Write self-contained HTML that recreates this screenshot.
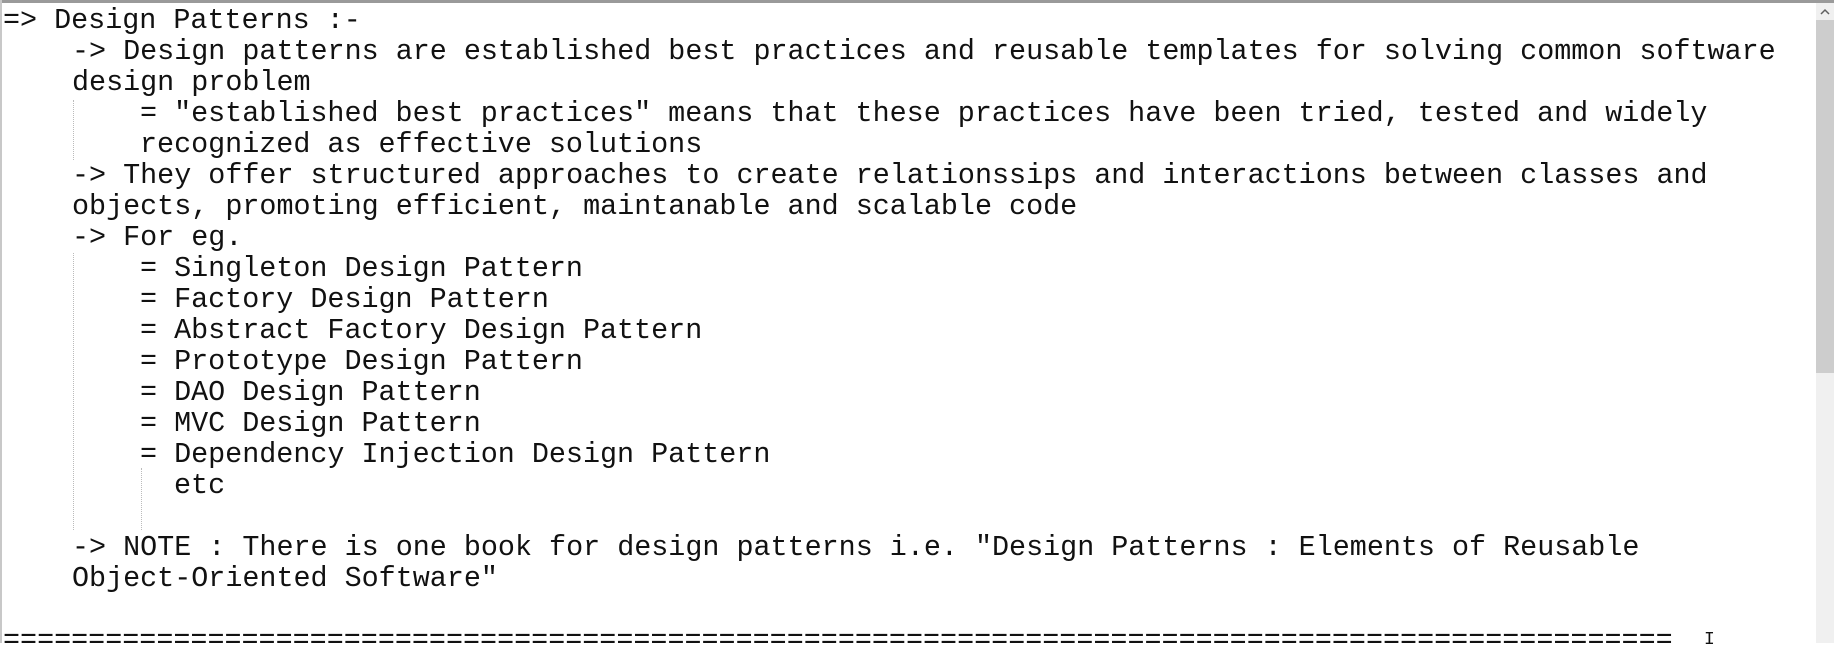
<!DOCTYPE html>
<html><head><style>
html,body{margin:0;padding:0;width:1834px;height:643px;overflow:hidden;background:#fff;}
.t{position:absolute;white-space:pre;font-family:"Liberation Mono","Courier New",monospace;font-size:28.4px;line-height:31px;height:31px;color:#111;}
.top{position:absolute;left:0;top:0;width:1834px;height:3px;background:#9a9a9a;}
.lb{position:absolute;left:0;top:0;width:2px;height:643px;background:#c8c8c8;}
.sb{position:absolute;left:1816px;top:3px;width:18px;height:640px;background:#f0f0f0;}
.th{position:absolute;left:1816px;top:20px;width:18px;height:353px;background:#cdcdcd;}
.g{position:absolute;width:0;border-left:1px dotted #bbb;}
</style></head><body>
<div class="top"></div><div class="lb"></div>
<div class="sb"></div><div class="th"></div>
<svg style="position:absolute;left:1819px;top:8px" width="12" height="8"><path d="M2 6 L6 2 L10 6" fill="none" stroke="#606060" stroke-width="1.5"/></svg>
<div class="g" style="left:73px;top:100px;height:60px"></div>
<div class="g" style="left:73px;top:253px;height:277px"></div>
<div class="g" style="left:141px;top:468px;height:62px"></div>
<div class="t" style="left:3px;top:4.5px">=&gt; Design Patterns :-</div>
<div class="t" style="left:72px;top:35.5px">-&gt; Design patterns are established best practices and reusable templates for solving common software</div>
<div class="t" style="left:72px;top:66.5px">design problem</div>
<div class="t" style="left:140px;top:97.5px">= "established best practices" means that these practices have been tried, tested and widely</div>
<div class="t" style="left:140px;top:128.5px">recognized as effective solutions</div>
<div class="t" style="left:72px;top:159.5px">-&gt; They offer structured approaches to create relationssips and interactions between classes and</div>
<div class="t" style="left:72px;top:190.5px">objects, promoting efficient, maintanable and scalable code</div>
<div class="t" style="left:72px;top:221.5px">-&gt; For eg.</div>
<div class="t" style="left:140px;top:252.5px">= Singleton Design Pattern</div>
<div class="t" style="left:140px;top:283.5px">= Factory Design Pattern</div>
<div class="t" style="left:140px;top:314.5px">= Abstract Factory Design Pattern</div>
<div class="t" style="left:140px;top:345.5px">= Prototype Design Pattern</div>
<div class="t" style="left:140px;top:376.5px">= DAO Design Pattern</div>
<div class="t" style="left:140px;top:407.5px">= MVC Design Pattern</div>
<div class="t" style="left:140px;top:438.5px">= Dependency Injection Design Pattern</div>
<div class="t" style="left:174px;top:469.5px">etc</div>
<div class="t" style="left:72px;top:531.5px">-&gt; NOTE : There is one book for design patterns i.e. "Design Patterns : Elements of Reusable</div>
<div class="t" style="left:72px;top:562.5px">Object-Oriented Software"</div>
<div class="t" style="left:3px;top:624.5px">==================================================================================================</div>
<div class="t" style="left:1704px;top:624.5px;font-size:18px">I</div>
</body></html>
